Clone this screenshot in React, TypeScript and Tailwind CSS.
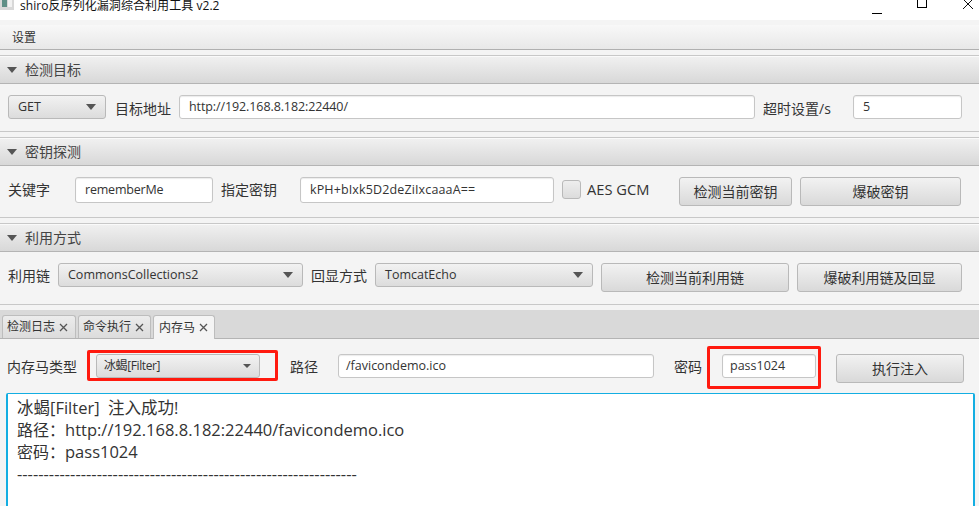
import React from "react";

const Caret = ({ small }: { small?: boolean }) => (
  <svg width={small ? 8 : 10} height={small ? 4 : 6} viewBox="0 0 10 6" preserveAspectRatio="none" className="shrink-0">
    <path d="M0 0H10L5 6Z" fill="#555555" />
  </svg>
);

const Combo = ({ text, className }: { text: string; className: string }) => (
  <div
    className={
      "flex h-[24px] items-center justify-between rounded-[3px] border border-[#b9b9b9] bg-gradient-to-b from-[#f2f2f2] to-[#dcdcdc] text-[#333333] " +
      className
    }
  >
    <span className="whitespace-nowrap">{text}</span>
    <Caret small={text.startsWith("冰蝎")} />
  </div>
);

const Field = ({ text, className }: { text: string; className: string }) => (
  <div
    className={
      "flex items-center rounded-[3px] border border-[#c6c6c6] bg-white text-[12.5px] text-[#333333] shadow-[inset_0_1px_1px_#ececec] " +
      className
    }
  >
    <span className="whitespace-nowrap">{text}</span>
  </div>
);

const Label = ({ text, className }: { text: string; className: string }) => (
  <div className={"h-[24px] whitespace-nowrap text-[14px] leading-[26px] text-[#333333] " + className}>{text}</div>
);

const Btn = ({ text, className }: { text: string; className: string }) => (
  <div
    className={
      "flex h-[29px] items-center justify-center rounded-[3px] border border-[#b9b9b9] bg-gradient-to-b from-[#f2f2f2] to-[#d9d9d9] text-[14px] text-[#333333] " +
      className
    }
  >
    {text}
  </div>
);

const Section = ({ title, children, pad }: { title: string; children: React.ReactNode; pad: string }) => (
  <div className="mt-[5px] border-t border-[#c8c8c8]">
    <div className="flex h-[28px] items-center border-b border-[#b4b4b4] border-t border-t-[#fafafa] bg-gradient-to-b from-[#f0f0f0] to-[#d8d8d8] pl-[7px]">
      <Caret />
      <span className="mb-[2px] ml-[8px] text-[14px] text-[#444444]">{title}</span>
    </div>
    <div className={"flex items-start border-b border-[#c8c8c8] pl-[8px] pt-[11px] " + pad}>{children}</div>
  </div>
);

const Tab = ({ text, active, className }: { text: string; active?: boolean; className: string }) => (
  <div
    className={
      "flex items-center gap-[4px] rounded-t-[3px] border border-b-0 border-[#bdbdbd] text-[12px] text-[#333333] " +
      (active ? "h-[24px] bg-[#f4f4f4] " : "h-[23px] bg-gradient-to-b from-[#ececec] to-[#dcdcdc] ") +
      className
    }
  >
    <span className="whitespace-nowrap">{text}</span>
    <svg width="9" height="9" viewBox="0 0 9 9">
      <path d="M1 1L8 8M8 1L1 8" stroke="#555555" strokeWidth="1.3" />
    </svg>
  </div>
);

export default function App() {
  return (
    <div
      className="h-[506px] w-[979px] overflow-hidden bg-[#f4f4f4]"
      style={{ fontFamily: '"Open Sans", "Noto Sans CJK SC", sans-serif' }}
    >
      {/* window title, cut by the top of the shot */}
      <div className="flex h-[20px] items-start overflow-hidden bg-white">
        <svg width="14" height="10" viewBox="0 0 14 10" className="ml-0 shrink-0">
          <rect x="0" y="0" width="14" height="10" fill="#d8d8d8" />
          <rect x="2" y="0" width="5" height="7" fill="#5f8f86" />
          <rect x="8" y="0" width="4" height="7" fill="#f2f2f2" />
        </svg>
        <div className="ml-[6px] -mt-[5px] whitespace-nowrap text-[12px] leading-[22px] tracking-[0.06px] text-[#111111]">
          shiro反序列化漏洞综合利用工具 v2.2
        </div>
        <div className="ml-auto flex shrink-0 items-start">
          <div className="mt-[13px] h-px w-[10px] bg-black" />
          <div className="ml-[35px] h-[8px] w-[10px] border border-t-0 border-black" />
          <svg width="10" height="9" viewBox="0 0 10 9" className="ml-[36px] mr-[6px]">
            <path d="M0 -1L10 9M10 -1L0 9" stroke="#111111" strokeWidth="1" />
          </svg>
        </div>
      </div>

      <div className="mt-[5px] flex h-[25px] items-center border-b border-[#b0b0b0] bg-gradient-to-b from-[#f8f8f8] to-[#e8e8e8] pl-[12px] pt-[1px] text-[12px] text-[#333333]">
        设置
      </div>

      <Section title="检测目标" pad="pb-[12px]">
        <Combo text="GET" className="w-[98px] pl-[9px] pr-[9px] text-[12.5px]" />
        <Label text="目标地址" className="ml-[9px] w-[56px] translate-y-px" />
        <Field text="http://192.168.8.182:22440/" className="ml-[8px] h-[24px] w-[576px] pl-[9px] pt-px tracking-[-0.1px]" />
        <Label text="超时设置/s" className="ml-[8px] w-[68px] translate-y-px" />
        <Field text="5" className="ml-[22px] h-[24px] w-[109px] pl-[9px]" />
      </Section>

      <Section title="密钥探测" pad="pb-[11px]">
        <Label text="关键字" className="w-[42px]" />
        <Field text="rememberMe" className="ml-[25px] h-[26px] w-[138px] pl-[9px] tracking-[-0.2px]" />
        <Label text="指定密钥" className="ml-[8px] w-[56px]" />
        <Field text="kPH+bIxk5D2deZiIxcaaaA==" className="ml-[23px] h-[26px] w-[254px] pl-[9px] tracking-[0.13px]" />
        <div className="ml-[8px] mt-[3px] h-[19px] w-[19px] rounded-[3px] border border-[#b9b9b9] bg-gradient-to-b from-[#eeeeee] to-[#dcdcdc]" />
        <div className="ml-[6px] w-[63px] whitespace-nowrap text-[14.7px] leading-[25px] text-[#333333]">AES GCM</div>
        <Btn text="检测当前密钥" className="ml-[29px] w-[113px]" />
        <Btn text="爆破密钥" className="ml-[8px] w-[161px]" />
      </Section>

      <Section title="利用方式" pad="pb-[12px]">
        <Label text="利用链" className="w-[42px]" />
        <Combo text="CommonsCollections2" className="ml-[8px] w-[245px] pl-[9px] pr-[9px] text-[12.5px]" />
        <Label text="回显方式" className="ml-[8px] w-[56px]" />
        <Combo text="TomcatEcho" className="ml-[8px] w-[218px] pl-[9px] pr-[9px] text-[12.5px]" />
        <Btn text="检测当前利用链" className="ml-[8px] w-[188px]" />
        <Btn text="爆破利用链及回显" className="ml-[8px] w-[165px]" />
      </Section>

      <div className="mt-[5px] flex h-[29px] items-end gap-[2px] border-b border-[#b4b4b4] bg-[#d9d9d9] pl-[2px]">
        <Tab text="检测日志" className="w-[74px] pl-[4px]" />
        <Tab text="命令执行" className="w-[73px] pl-[4px]" />
        <Tab text="内存马" active className="-mb-px w-[62px] pl-[5px]" />
      </div>

      <div className="flex items-start pl-[7px] pt-[15px]">
        <Label text="内存马类型" className="w-[69px]" />
        <div className="relative ml-[20px]">
          <Combo text="冰蝎[Filter]" className="w-[164px] pl-[7px] pr-[8px] text-[12px] tracking-[-0.4px]" />
          <div className="absolute left-[-9px] top-[-4px] h-[31px] w-[191px] rounded-[2px] border-[3px] border-[#ff1a0f]" />
        </div>
        <Label text="路径" className="ml-[30px] w-[28px]" />
        <Field text="/favicondemo.ico" className="ml-[20px] h-[24px] w-[316px] pl-[7px]" />
        <Label text="密码" className="ml-[20px] w-[28px]" />
        <div className="relative ml-[20px]">
          <Field text="pass1024" className="h-[24px] w-[94px] pl-[7px]" />
          <div className="absolute left-[-15px] top-[-8px] h-[43px] w-[114px] rounded-[2px] border-[3px] border-[#ff1a0f]" />
        </div>
        <Btn text="执行注入" className="ml-[20px] w-[128px]" />
      </div>

      <div className="ml-[6px] mt-[10px] h-[140px] w-[969px] rounded-t-[2px] border-x-2 border-t border-[#14aee2] bg-white pl-[9px] pt-[3px] text-[16.5px] leading-[22px] text-[#333333]">
        <div>冰蝎[Filter]&nbsp; 注入成功!</div>
        <div><span className="text-[16px]">路径：</span>http://192.168.8.182:22440/favicondemo.ico</div>
        <div><span className="text-[16px]">密码：</span>pass1024</div>
        <div className="whitespace-nowrap">----------------------------------------------------------------</div>
      </div>
    </div>
  );
}
